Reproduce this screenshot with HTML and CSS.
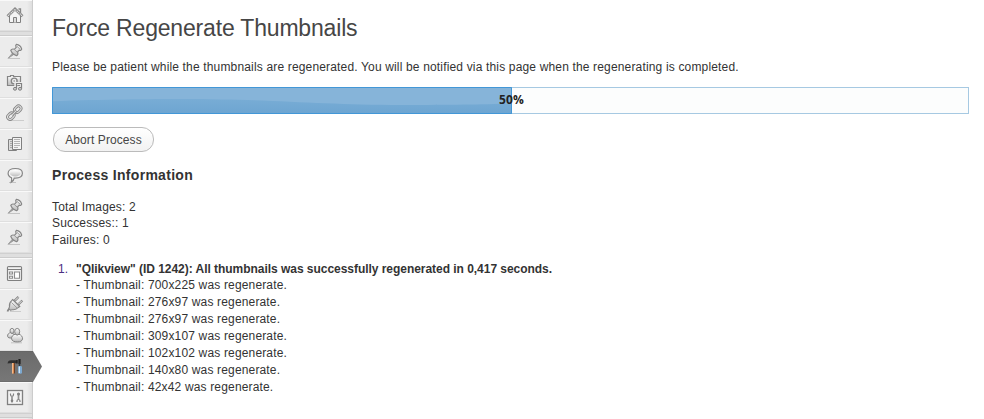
FILE: index.html
```
<!DOCTYPE html>
<html lang="en">
<head>
<meta charset="utf-8">
<title>Force Regenerate Thumbnails</title>
<link rel="stylesheet" href="styles.css">
</head>
<body>
<svg class="defs" width="0" height="0" aria-hidden="true">
  <defs>
    <linearGradient id="metal" x1="0" y1="0" x2="0" y2="1"><stop offset="0" stop-color="#fff"/><stop offset="1" stop-color="#bbb"/></linearGradient>
    <symbol id="pin" viewBox="0 0 33 31">
      <path d="M9 22.5h11" stroke="#c4c4c4" stroke-width="1"/>
      <path d="M8 22.4l5-6 1.6 1.5z" fill="#999" stroke="#999" stroke-width=".8"/>
      <path d="M16.300 8.400c2.200.3 4.700 2.400 5.400 4.700-.5 1.400-1.600 1.500-2.500 1.100l-1.700 1.800c.9 1.600.3 3.200-.9 3.700-2.700-.9-4.900-2.900-5.800-5.300.7-1.300 2.300-1.600 3.600-1.100l1.800-1.900c-.6-1.100-.7-2.300.1-3z" fill="url(#metal)" stroke="#858585" stroke-width="1.200"/>
      <path d="M14.300 13.600l3 2.600M16.800 10.200l3.200 3" stroke="#999"/>
    </symbol>
  </defs>
</svg>
<div class="layout">
  <nav class="menu">
    <a class="item"><svg viewBox="0 0 33 31"><path d="M9.5 15v7.5h11V15L15 10z" fill="#f4f4f4" stroke="#808080"/><path d="M18.5 9h2v4" fill="none" stroke="#888" stroke-width="1.3"/><path d="M7.5 16.2L15 9l7.5 7.2" fill="none" stroke="#888" stroke-width="2.8"/><path d="M8 15.8L15 9.3l7 6.5" fill="none" stroke="#e4e4e4" stroke-width="1.2" stroke-dasharray="1.2 .8"/><path d="M13.5 22.5v-5h3v5" fill="#ddd" stroke="#808080"/></svg></a>
    <div class="separator"></div>
    <a class="item"><svg><use href="#pin"/></svg></a>
    <a class="item"><svg viewBox="0 0 33 31"><path d="M8.500 9.500h2v-1h3v1h7v9h-13v-9z" fill="url(#metal)" stroke="#858585" stroke-width="1.200"/><circle cx="14.200" cy="14" r="2.900" fill="#eee" stroke="#858585" stroke-width="1.400"/><circle cx="14.200" cy="14" r=".9" fill="#aaa"/><path d="M15.800 22v-5.500h5.700v5.500" fill="none" stroke="#ececec" stroke-width="3"/><path d="M16.500 21.500v-5h5v5" fill="none" stroke="#808080" stroke-width="1.200"/><ellipse cx="15" cy="21.800" rx="1.600" ry="1.400" fill="#ccc" stroke="#808080"/><ellipse cx="20" cy="21.800" rx="1.600" ry="1.400" fill="#ccc" stroke="#808080"/></svg></a>
    <a class="item"><svg viewBox="0 0 33 31"><path d="M9 22.500h15" stroke="#ccc"/><g transform="translate(0 -.3) rotate(-45 14.300 15)" fill="none"><rect x="5.800" y="12.500" width="7.300" height="5" rx="2.500" stroke="#858585" stroke-width="2.700"/><rect x="15.500" y="12.500" width="7.300" height="5" rx="2.500" stroke="#858585" stroke-width="2.700"/><rect x="5.800" y="12.500" width="7.300" height="5" rx="2.500" stroke="#e2e2e2" stroke-width="1"/><rect x="15.500" y="12.500" width="7.300" height="5" rx="2.500" stroke="#e2e2e2" stroke-width="1"/><path d="M11 15h6.500" stroke="#858585" stroke-width="2.700"/><path d="M11 15h6.500" stroke="#e2e2e2"/></g></svg></a>
    <a class="item"><svg viewBox="0 0 33 31"><path d="M8.500 10.500h8v11h-8z" fill="#ddd" stroke="#808080"/><path d="M10 12.500h2M10 14.500h2M10 16.500h2M10 18.500h2" stroke="#aaa"/><path d="M12.500 8.500h9v12h-9z" fill="#f4f4f4" stroke="#808080"/><path d="M14 10.500h6M14 12.500h6M14 14.500h6M14 16.500h6M14 18.500h4" stroke="#b5b5b5"/></svg></a>
    <a class="item"><svg viewBox="0 0 33 31"><path d="M9 22.500h7" stroke="#c4c4c4"/><path d="M15.200 8.500c4.300 0 7.200 1.900 7.200 4.800s-2.900 4.800-7 4.800h-1.200c-.3 1.700-1.400 3.400-3 4.200.5-1.500.7-3 .3-4.600-2.200-.8-3.400-2.400-3.400-4.400 0-2.900 3-4.800 7.100-4.800z" fill="#f4f4f4" stroke="#858585" stroke-width="1.200"/><ellipse cx="15.300" cy="13.400" rx="5.300" ry="3.100" fill="url(#metal)"/></svg></a>
    <a class="item"><svg><use href="#pin"/></svg></a>
    <a class="item"><svg><use href="#pin"/></svg></a>
    <div class="separator"></div>
    <a class="item"><svg viewBox="0 0 33 31"><rect x="7.500" y="8.500" width="14" height="14" rx="1" fill="#f3f3f3" stroke="#808080" stroke-width="1.200"/><path d="M8 9.500h13" stroke="#ddd"/><path d="M8 11.500h13" stroke="#808080"/><path d="M9.500 14h3v2h-3zM9.500 18.300h3v2h-3zM14.500 14h5v6.300h-5z" fill="#fff" stroke="#8c8c8c" stroke-width="1.100"/></svg></a>
    <a class="item"><svg viewBox="0 0 33 31"><path d="M10 22.500h11" stroke="#ccc"/><path d="M7.500 22.500c.3-1.500 1-2.500 2.500-3.300" fill="none" stroke="#858585" stroke-width="1.800"/><path d="M14.500 11.800l4-4M18.300 15.500l4-4" stroke="#858585" stroke-width="2.400"/><path d="M15 11.500l3.200-3.200M18.600 15l3.200-3.200" stroke="#eee" stroke-width="1"/><path d="M12.600 10.500l7.200 7-1.500 1c-1.800 2-3.700 2.500-6 2.200l-2 .5-1.500-1.500.7-2c-.4-2.400.2-4.400 2-5.800z" fill="url(#metal)" stroke="#858585" stroke-width="1.100"/><path d="M11.500 13.500l5.500 5.500" stroke="#a0a0a0"/></svg></a>
    <a class="item"><svg viewBox="0 0 33 31"><path d="M11 22.800h11" stroke="#c4c4c4"/><g fill="url(#metal)" stroke="#858585"><path d="M10.300 12.600c-1.800.7-2.900 1.800-2.700 3.700.2 1.500 1.800 1.900 4.500 1.700l2-3.800z"/><ellipse cx="12" cy="10.900" rx="2" ry="2.500"/><path d="M15.200 14.200c-2.500.8-4 2.500-3.600 4.700.4 2.200 2.600 3 5.700 3 3 0 5-.9 5.200-3 .2-2.100-1.200-3.900-3.500-4.700-.9.700-2.800.7-3.800 0z"/><ellipse cx="17.200" cy="11.700" rx="2.500" ry="3.300"/></g></svg></a>
    <a class="item current"><svg viewBox="0 0 33 31"><path d="M7.500 12.500c.5-2.300 1.500-3.300 3.500-3.300h6v3H9.500z" fill="#303030"/><path d="M17 9v3.500" stroke="#222" stroke-width="1.400"/><path d="M12 12h2.500v10.500H12z" fill="#d98a50"/><path d="M12.500 12v10.500" stroke="#f3b98b"/><path d="M14.500 12v10.500" stroke="#69402a"/><path d="M19.500 8v5" stroke="#222" stroke-width="2.200"/><path d="M19.500 12.500v3" stroke="#303840" stroke-width="1.500"/><rect x="18" y="15" width="4" height="7.800" rx="1.300" fill="#7da9d0"/><path d="M19.400 15.500v6.500" stroke="#d5e8f8" stroke-width="1.200"/></svg><svg class="arrow" viewBox="0 0 10 31"><defs><linearGradient id="act" x1="0" y1="0" x2="0" y2="1"><stop offset="0" stop-color="#6b6b6b"/><stop offset="1" stop-color="#777"/></linearGradient></defs><path d="M0 0l9 15.500L0 31z" fill="url(#act)"/></svg></a>
    <a class="item"><svg viewBox="0 0 33 31"><rect x="7.500" y="8.500" width="15" height="14" fill="#f3f3f3" stroke="#808080" stroke-width="1.300"/><path d="M12 15v5.500M18.500 11v6" stroke="#909090" stroke-width="1.700"/><path d="M10.500 11.500v1.300c0 2 3 2 3 0v-1.300M17 20v-1c0-2 3-2 3 0v1" fill="none" stroke="#808080" stroke-width="1.200"/><circle cx="12" cy="18.800" r="1.300" fill="#808080"/><circle cx="18.500" cy="12" r="1.500" fill="#808080"/></svg></a>
    <div class="separator"></div>
  </nav>
  <main class="content">
    <h1>Force Regenerate Thumbnails</h1>
    <p class="intro">Please be patient while the thumbnails are regenerated. You will be notified via this page when the regenerating is completed.</p>
    <div class="progress">
      <svg class="fill" viewBox="0 0 460 27" preserveAspectRatio="none"><defs><linearGradient id="wave" x1="0" y1="0" x2="0" y2="1"><stop offset="0" stop-color="#78acd5"/><stop offset="1" stop-color="#6da5d1"/></linearGradient></defs><path d="M0 0h460v27H0z" fill="#86b4d9"/><path d="M0 14.300C50 12.300 100 12 130 12C220 12 270 18 350 18C400 18 430 17.500 460 16.500V27H0z" fill="url(#wave)"/><path d="M.5.5h459v26H.5z" fill="none" stroke="#4297d7"/></svg>
      <span class="percent">50%</span>
    </div>
    <button class="button" type="button">Abort Process</button>
    <h3>Process Information</h3>
    <p class="stats"><span>Total Images: 2</span><br><span>Successes:: 1</span><br><span>Failures: 0</span></p>
    <div class="log">
      <span class="number">1.</span>
      <div class="entry"><b>"Qlikview" (ID 1242): All thumbnails was successfully regenerated in 0,417 seconds.</b><br>- Thumbnail: 700x225 was regenerate.<br>- Thumbnail: 276x97 was regenerate.<br>- Thumbnail: 276x97 was regenerate.<br>- Thumbnail: 309x107 was regenerate.<br>- Thumbnail: 102x102 was regenerate.<br>- Thumbnail: 140x80 was regenerate.<br>- Thumbnail: 42x42 was regenerate.</div>
    </div>
  </main>
</div>
</body>
</html>
```
FILE: styles.css
```
* { box-sizing: border-box; }
body { margin: 0; background: #fff; color: #333; font: 12px/16.8px "Liberation Sans", Arial, sans-serif; letter-spacing: .161px; }
.defs { display: block; height: 0; }
.layout { display: flex; height: 419px; }
.menu { width: 33px; height: 419px; flex: none; background: linear-gradient(90deg, #ececec 0, #ececec 27px, #dedede 32px); border-right: 1px solid #ccc; }
.item { display: block; position: relative; height: 31px; border-top: 1px solid #f9f9f9; border-bottom: 1px solid #dfdfdf; }
.item svg { display: block; width: 33px; height: 31px; margin-top: -1px; fill: none; }
.separator { height: 5px; background: #dfdfdf; border-top: 1px solid #d0d0d0; border-bottom: 1px solid #ccc; }
.item.current { background: linear-gradient(#6b6b6b, #777); border-color: #666 #666 #6d6d6d; width: 33px; }
.item .arrow { position: absolute; left: 33px; top: -1px; width: 10px; height: 31px; margin: 0; }
.content { flex: 1; min-width: 0; padding: 14px 15px 0 19px; }
h1 { margin: 0; font-size: 23px; line-height: 29px; font-weight: 400; color: #464646; letter-spacing: -.18px; }
.intro { margin: 16px 0 11px; line-height: 17px; white-space: nowrap; }
.progress { position: relative; height: 27px; border: 1px solid #a6c9e2; background: #fcfdfd; }
.fill { position: absolute; left: -1px; top: -1px; width: 460px; height: 27px; }
.percent { position: absolute; left: 0; right: 0; top: 3px; padding-left: 2px; text-align: center; font: bold 12px/17px "Open Sans", sans-serif; color: #222; }
.button { display: block; margin: 13px 0 0 1px; width: 101px; height: 25px; padding: 1px 0 0; border: 1px solid #bbb; border-radius: 12px; background: linear-gradient(#fff, #f2f2f2); color: #464646; font: 12px/22px "Liberation Sans", Arial, sans-serif; letter-spacing: .1px; }
h3 { margin: 14px 0 15px; font-size: 14px; line-height: 18px; color: #333; letter-spacing: .3px; }
.stats { margin: 0; line-height: 16.4px; }
.log { display: flex; margin-top: 12.4px; line-height: 16.86px; }
.number { width: 24px; padding-left: 6px; color: #4b2e83; }
.entry { white-space: nowrap; }
.entry b { letter-spacing: -.037px; }
```
